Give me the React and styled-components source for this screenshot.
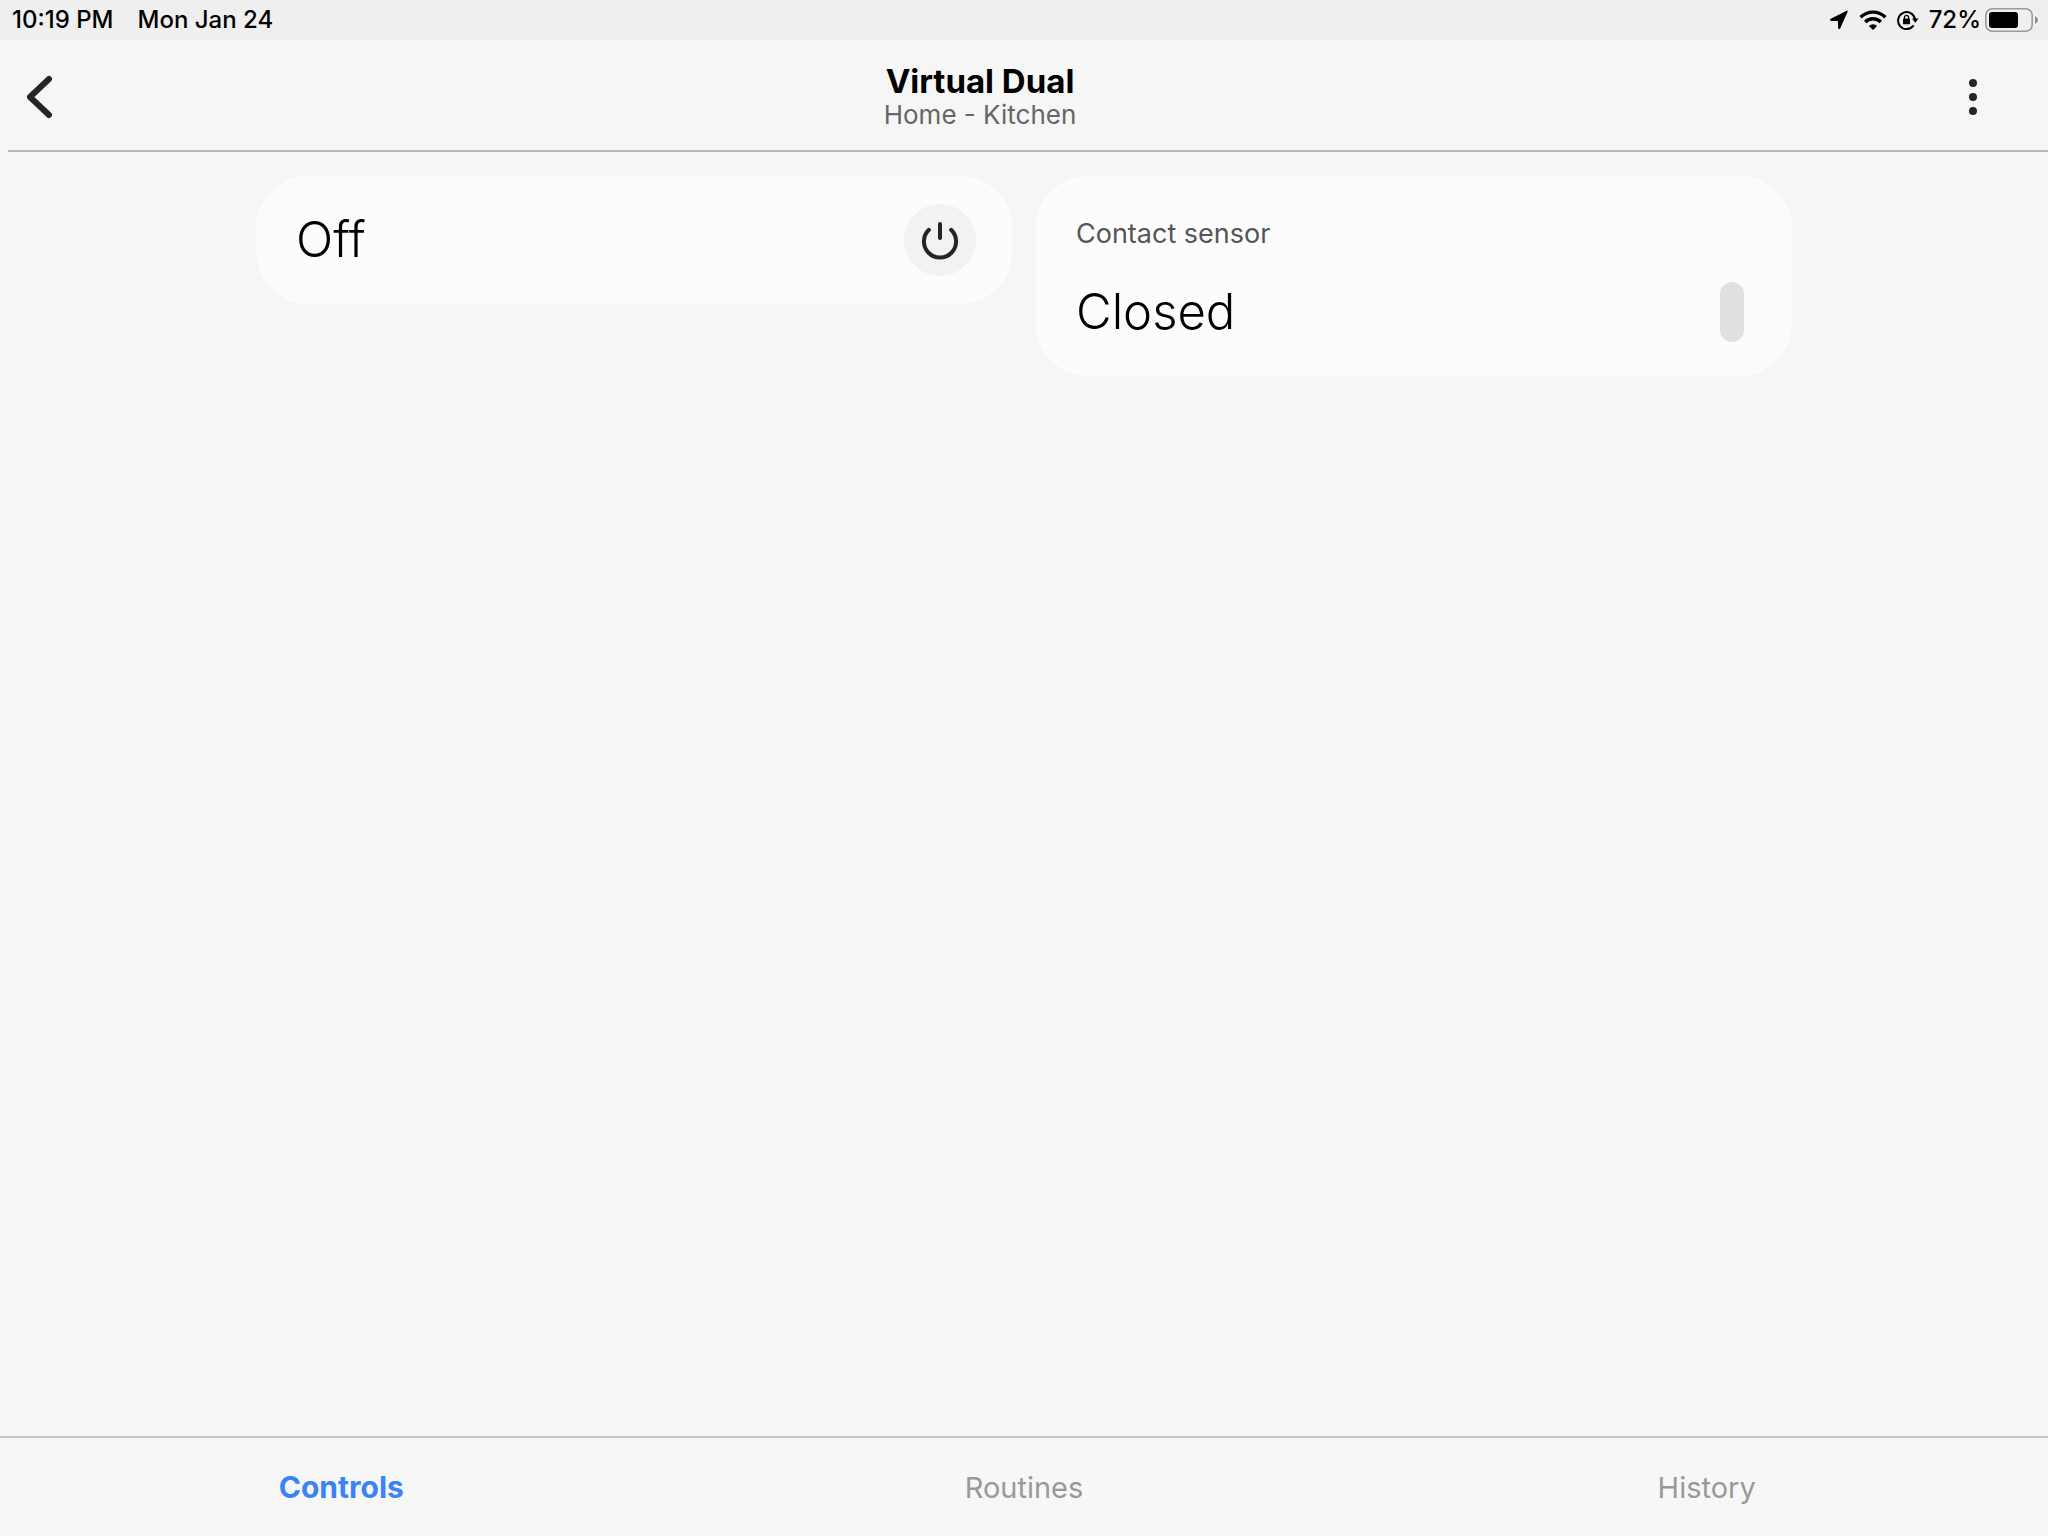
import React, { useState } from 'react';
import styled, { createGlobalStyle } from 'styled-components';

const tabs = ['Controls', 'Routines', 'History'];

const LocationIcon = () => (
    <svg width="20" height="20" viewBox="0 0 20 20" aria-hidden="true">
        <path d="M18 1.4 10.6 18Q10 18.8 9.8 17.8L9.6 10.4 2.2 10.2Q1.2 10 2 9.4Z"
            fill="#000" stroke="#000" strokeWidth="1.4" strokeLinejoin="round" />
    </svg>
)

const WifiIcon = () => (
    <svg width="28" height="20" viewBox="0 0 28 20" aria-hidden="true">
        <g fill="none" stroke="#000" strokeWidth="3.4">
            <path d="M1.6 7.2a17.6 17.6 0 0 1 24.8 0" />
            <path d="M6.2 12a11 11 0 0 1 15.6 0" />
        </g>
        <path d="M14 20 9.9 15.9a5.8 5.8 0 0 1 8.2 0Z" fill="#000" />
    </svg>
)

const RotationLockIcon = () => (
    <svg width="22" height="20" viewBox="0 0 22 20" aria-hidden="true">
        <path d="M16.6 15.4A8.5 8.5 0 1 1 18 9.4" fill="none" stroke="#000" strokeWidth="2" />
        <path d="M15 8.4h6.6L18.3 12.8Z" fill="#000" />
        <rect x="6" y="8.6" width="7" height="5.6" rx="0.8" fill="#000" />
        <path d="M7.4 9V7.4a2.1 2.1 0 0 1 4.2 0V9" fill="none" stroke="#000" strokeWidth="1.2" />
    </svg>
)

const BatteryIcon = () => (
    <svg width="54" height="24" viewBox="0 0 54 24" aria-hidden="true">
        <rect x="0.8" y="0.8" width="46.4" height="22.4" rx="6.4" fill="none" stroke="#9a9a9a" strokeWidth="1.6" />
        <rect x="4" y="4" width="29" height="16" rx="3" fill="#000" />
        <path d="M50 8q3 1.4 3 4t-3 4Z" fill="#8a8a8a" />
    </svg>
)

const BackIcon = () => (
    <svg width="28" height="44" viewBox="0 0 28 44" aria-hidden="true">
        <path d="M23 4 4 22 23 40" fill="none" stroke="#252525" strokeWidth="6"
            strokeLinecap="round" strokeLinejoin="round" />
    </svg>
)

const MoreIcon = () => (
    <svg width="8" height="36" viewBox="0 0 8 36" fill="#252525" aria-hidden="true">
        <circle cx="4" cy="4" r="4" />
        <circle cx="4" cy="18" r="4" />
        <circle cx="4" cy="32" r="4" />
    </svg>
)

const PowerIcon = () => (
    <svg width="40" height="40" viewBox="0 0 40 40" aria-hidden="true">
        <path d="M20 4v14M8.9 9.8a16.1 16.1 0 1 0 22.2 0" fill="none" stroke="#252525"
            strokeWidth="4" strokeLinecap="round" />
    </svg>
)

export default function App() {
    const [activeTab, setActiveTab] = useState('Controls');
    const [isOn, setOn] = useState(false);

    return (
        <Page>
            <GlobalStyle />
            <StatusBar>
                <StatusGroup $gap={24}>
                    <span>10:19 PM</span>
                    <span>Mon Jan 24</span>
                </StatusGroup>
                <StatusGroup $gap={10}>
                    <LocationIcon />
                    <WifiIcon />
                    <RotationLockIcon />
                    <Battery>
                        <span>72%</span>
                        <BatteryIcon />
                    </Battery>
                </StatusGroup>
            </StatusBar>
            <Header>
                <BackButton aria-label="Back"><BackIcon /></BackButton>
                <Heading>
                    <h1>Virtual Dual</h1>
                    <p>Home - Kitchen</p>
                </Heading>
                <HeaderButton aria-label="More options"><MoreIcon /></HeaderButton>
            </Header>
            <Cards>
                <Card>
                    <CardRow>
                        <CardValue>{isOn ? 'On' : 'Off'}</CardValue>
                        <PowerButton
                            aria-label="Power"
                            aria-pressed={isOn}
                            onClick={() => setOn(!isOn)}>
                            <PowerIcon />
                        </PowerButton>
                    </CardRow>
                </Card>
                <Card>
                    <CardLabel>Contact sensor</CardLabel>
                    <CardRow>
                        <CardValue>Closed</CardValue>
                        <SensorState />
                    </CardRow>
                </Card>
            </Cards>
            <TabBar>
                {tabs.map((tab) => (
                    <Tab
                        key={tab}
                        $active={tab === activeTab}
                        aria-current={tab === activeTab ? 'page' : undefined}
                        onClick={() => setActiveTab(tab)}>
                        {tab}
                    </Tab>
                ))}
            </TabBar>
        </Page>
    )
}

const GlobalStyle = createGlobalStyle`
    * {
        box-sizing: border-box;
    }
    body {
        margin: 0;
        background: #f6f6f6;
        font-family: Inter, "Liberation Sans", sans-serif;
    }
    h1, p {
        margin: 0;
    }
    button {
        padding: 0;
        border: 0;
        background: none;
        font-family: inherit;
        cursor: pointer;
    }
    svg {
        display: block;
    }
`;
const Page = styled.div`
    display: flex;
    flex-direction: column;
    min-height: 100vh;
`;
const StatusBar = styled.div`
    display: flex;
    align-items: center;
    justify-content: space-between;
    height: 40px;
    padding: 0 9px 0 12px;
    background: #efefef;
    color: #000;
    font-size: 24px;
    font-weight: 500;
    line-height: 40px;
`;
const StatusGroup = styled.div`
    display: flex;
    align-items: center;
    gap: ${({ $gap }) => $gap}px;
`;
const Battery = styled.div`
    display: flex;
    align-items: center;
    gap: 4px;
`;
const Header = styled.header`
    display: grid;
    grid-template-columns: 54px 1fr 150px;
    height: 112px;
    margin-left: 8px;
    padding-top: 4px;
    border-bottom: 2px solid #b9b9b9;
`;
const HeaderButton = styled.button`
    display: flex;
    align-items: center;
    justify-content: center;
`;
const BackButton = styled(HeaderButton)`
    justify-content: flex-start;
    padding-left: 18px;
`;
const Heading = styled.div`
    display: flex;
    flex-direction: column;
    align-items: center;
    justify-content: center;
    h1 {
        font-size: 33px;
        font-weight: 700;
        line-height: 36px;
    }
    p {
        color: #666;
        font-size: 26px;
        line-height: 32px;
    }
`;
const Cards = styled.main`
    display: grid;
    grid-template-columns: 1fr 1fr;
    align-items: start;
    gap: 24px;
    flex: 1;
    width: 75%;
    margin: 0 auto;
    padding-top: 24px;
`;
const Card = styled.section`
    padding: 28px 36px 28px 40px;
    border-radius: 52px;
    background: #fcfcfc;
`;
const CardRow = styled.div`
    display: flex;
    align-items: center;
    justify-content: space-between;
    height: 72px;
`;
const CardLabel = styled.p`
    height: 72px;
    color: #555;
    font-size: 27px;
    line-height: 60px;
`;
const CardValue = styled.p`
    font-size: 49px;
    font-weight: 300;
    line-height: 64px;
`;
const PowerButton = styled.button`
    display: flex;
    align-items: center;
    justify-content: center;
    width: 72px;
    height: 72px;
    border-radius: 50%;
    background: #f2f2f2;
`;
const SensorState = styled.div`
    width: 24px;
    height: 60px;
    margin-right: 12px;
    border-radius: 12px;
    background: #e0e0e0;
`;
const TabBar = styled.nav`
    display: grid;
    grid-template-columns: repeat(3, 1fr);
    height: 100px;
    border-top: 2px solid #c3c3c3;
    background: #f7f7f7;
`;
const Tab = styled.button`
    color: ${({ $active }) => ($active ? '#3a82f7' : '#999')};
    font-size: ${({ $active }) => ($active ? 30 : 29)}px;
    font-weight: ${({ $active }) => ($active ? 700 : 400)};
`;
